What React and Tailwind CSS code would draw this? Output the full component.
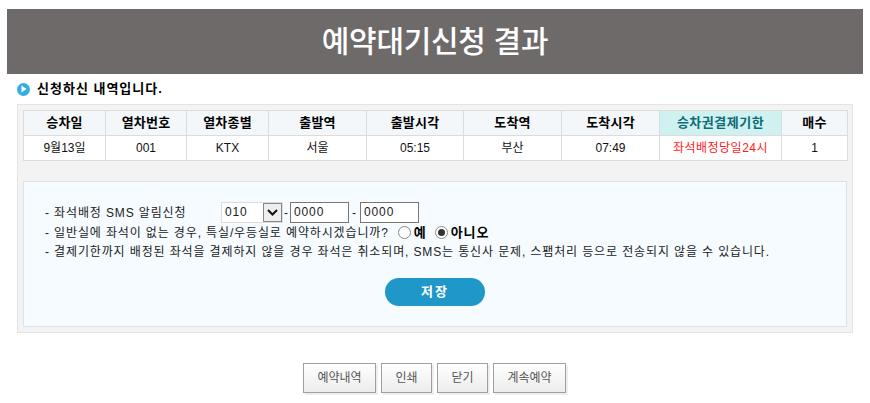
const FONT = "font-['Liberation_Sans','Noto_Sans_CJK_KR',sans-serif]"

const headers = [
  ['승차일', 'w-[82px]'],
  ['열차번호', 'w-[81px]'],
  ['열차종별', 'w-[82px]'],
  ['출발역', 'w-[98px]'],
  ['출발시각', 'w-[97px]'],
  ['도착역', 'w-[98px]'],
  ['도착시각', 'w-[98px]'],
  ['승차권결제기한', 'w-[122px]'],
  ['매수', 'w-[66px]'],
]
const cells = ['9월13일', '001', 'KTX', '서울', '05:15', '부산', '07:49', '좌석배정당일24시', '1']

function Radio({ checked }) {
  return (
    <span className="relative inline-block w-[13px] h-[13px] rounded-full border border-[#8a8a8a] bg-white">
      {checked && <span className="absolute left-[2px] top-[2px] w-[7px] h-[7px] rounded-full bg-[#333]" />}
    </span>
  )
}

function GrayButton({ children, width }) {
  return (
    <button className={`h-[30px] ${width} border border-[#a0a0a0] bg-gradient-to-b from-white to-[#ececec] text-xs text-[#555] shadow-[2px_2px_0_#eee]`}>
      {children}
    </button>
  )
}

export default function App() {
  return (
    <div className={`w-[870px] h-[403px] overflow-hidden bg-white pt-[9px] text-xs text-[#222] ${FONT}`}>
      <div className="mx-[7px] h-[65px] bg-[#6e6a6a] flex items-center justify-center text-[30px] tracking-[-0.3px] font-medium text-white">
        예약대기신청 결과
      </div>

      <div className="ml-[17px] mt-[8px] h-[14px] flex items-center gap-[7px]">
        <span className="w-[13px] h-[13px] rounded-full bg-[#35aee2] flex items-center justify-center">
          <svg width="6" height="8" viewBox="0 0 6 8"><path d="M0.5 0.5 L5.5 4 L0.5 7.5 Z" fill="#fff" /></svg>
        </span>
        <span className="text-[13px] font-bold text-black tracking-[1px]">신청하신 내역입니다.</span>
      </div>

      <div className="mx-[17px] mt-[8px] h-[229px] border border-[#e4e4e4] bg-[#f3f3f3] px-[5px] pt-[5px]">
        <table className="w-[824px] table-fixed border-collapse border border-[#dcdcdc] bg-white">
          <thead>
            <tr className="h-[25px]">
              {headers.map(([label, w], i) => (
                <th
                  key={label}
                  className={`${w} border border-[#dcdcdc] text-[13px] font-bold ${i === 7 ? 'bg-[#cff2f0] text-[#0f6a78] tracking-[0.5px]' : 'bg-[#f3f7fa] text-black tracking-[0.2px]'}`}
                >
                  {label}
                </th>
              ))}
            </tr>
          </thead>
          <tbody>
            <tr className="h-[25px]">
              {cells.map((c, i) => (
                <td key={i} className={`border border-[#dcdcdc] text-center text-xs ${i === 7 ? 'text-[#ff1a1a] tracking-[0.5px]' : 'text-[#111]'}`}>
                  {c}
                </td>
              ))}
            </tr>
          </tbody>
        </table>

        <div className="mt-[20px] h-[146px] border border-[#d8e4ea] bg-[#f5fbfe] pl-[21px] pt-[20px] tracking-[0.87px]">
          <div className="h-[21px] flex items-center">
            <span className="w-[176px]">- 좌석배정 SMS 알림신청</span>
            <span className="w-[62px] h-[21px] flex border border-[#dcdcdc] bg-white">
              <span className="flex-1 pl-[3px] leading-[19px]">010</span>
              <span className="w-[19px] h-[19px] border border-[#888] bg-[#eee] flex items-center justify-center">
                <svg width="11" height="7" viewBox="0 0 11 7"><path d="M1 1 L5.5 5.5 L10 1" fill="none" stroke="#111" strokeWidth="2" /></svg>
              </span>
            </span>
            <span className="w-[7px] text-center">-</span>
            <span className="w-[59px] h-[21px] border border-[#777] bg-white pl-[3px] leading-[19px]">0000</span>
            <span className="w-[11px] text-center">-</span>
            <span className="w-[59px] h-[21px] border border-[#777] bg-white pl-[3px] leading-[19px]">0000</span>
          </div>
          <div className="h-[19px] flex items-center">
            <span>- 일반실에 좌석이 없는 경우, 특실/우등실로 예약하시겠습니까?</span>
            <span className="ml-[9px] flex items-center gap-[3px]"><Radio /><b className="text-[13px] text-black">예</b></span>
            <span className="ml-[8px] flex items-center gap-[3px]"><Radio checked /><b className="text-[13px] tracking-[1px] text-black">아니오</b></span>
          </div>
          <div className="h-[20px] flex items-center">
            - 결제기한까지 배정된 좌석을 결제하지 않을 경우 좌석은 취소되며, SMS는 통신사 문제, 스팸처리 등으로 전송되지 않을 수 있습니다.
          </div>
          <div className="flex justify-center mt-[16px] pr-[21px]">
            <button className="w-[100px] h-[28px] rounded-full bg-[#1f97c8] text-[13px] font-bold text-white tracking-[2px]">저장</button>
          </div>
        </div>
      </div>

      <div className="mt-[30px] pr-[1px] flex justify-center gap-[5px]">
        <GrayButton width="w-[73px]">예약내역</GrayButton>
        <GrayButton width="w-[51px]">인쇄</GrayButton>
        <GrayButton width="w-[51px]">닫기</GrayButton>
        <GrayButton width="w-[73px]">계속예약</GrayButton>
      </div>
    </div>
  )
}
